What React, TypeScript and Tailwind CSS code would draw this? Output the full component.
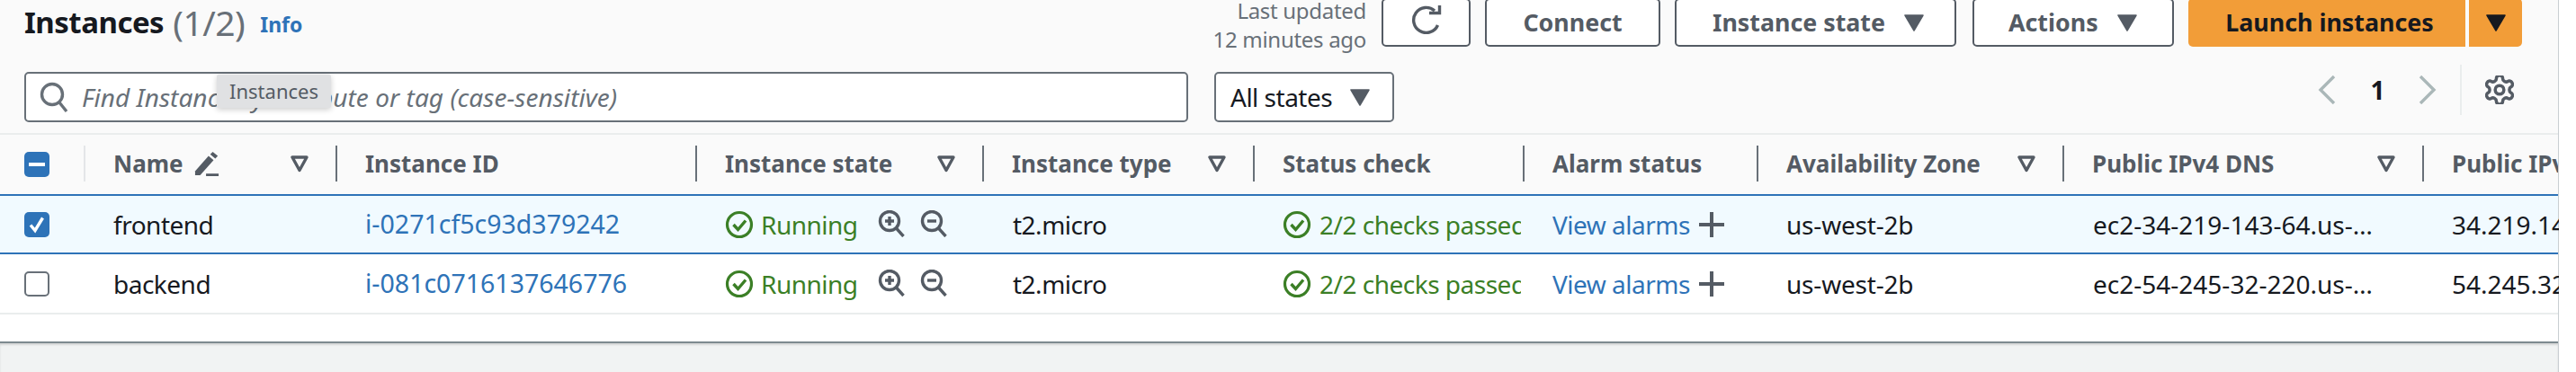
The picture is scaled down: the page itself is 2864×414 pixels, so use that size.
import React from 'react';

const columns = 'grid grid-cols-[93px_280px_400px_319px_301px_300px_260px_340px_400px_152px]';

const Caret = ({ className = 'text-[#545b64]' }: { className?: string }) => (
  <svg width="22" height="20" viewBox="0 0 22 20" className={className}>
    <path d="M1 2h20L11 19z" fill="currentColor" stroke="currentColor" strokeWidth="1.5" strokeLinejoin="round" />
  </svg>
);

const SortIcon = () => (
  <svg width="20" height="20" viewBox="0 0 20 20" className="text-[#545b64]">
    <path d="M2 3h16L10 17.5z" fill="none" stroke="currentColor" strokeWidth="3.4" strokeLinejoin="round" />
  </svg>
);

const StatusIcon = () => (
  <svg width="32" height="32" viewBox="0 0 32 32" fill="none" stroke="#3b7f26" className="shrink-0">
    <circle cx="16" cy="16" r="13.5" strokeWidth="3.2" />
    <path d="M9.5 16l5 5.5 8.5-10" strokeWidth="3.4" />
  </svg>
);

const ZoomIcon = ({ plus }: { plus?: boolean }) => (
  <svg width="30" height="30" viewBox="0 0 30 30" fill="none" stroke="#545b64" strokeWidth="3.4">
    <circle cx="13" cy="12" r="10.5" />
    <path d="M20.5 20l8 9" />
    <path d={plus ? 'M8 12h10M13 7v10' : 'M8 12h10'} />
  </svg>
);

const HeaderCell = ({ label, sort, first, pencil }: { label: string; sort?: boolean; first?: boolean; pencil?: boolean }) => (
  <div className="relative flex h-full items-center pl-[33px] pr-[30px]">
    <span className={first ? 'absolute left-0 h-[40px] w-[2px] bg-[#e4e6e8]' : 'absolute left-0 h-[40px] w-[2px] bg-[#687078]'} />
    <span className="whitespace-nowrap">{label}</span>
    {pencil && (
      <svg width="28" height="30" viewBox="0 0 30 30" className="ml-[12px]" fill="#545b64">
        <path d="M1 24L17 6l6 5L7 29H1z" />
        <path d="M19 4l3-3 6 5-3 3z" />
        <path d="M14 27h15v3H14z" />
      </svg>
    )}
    {sort && (
      <span className="ml-auto flex">
        <SortIcon />
      </span>
    )}
  </div>
);

const Checkbox = ({ checked }: { checked?: boolean }) =>
  checked ? (
    <span className="flex h-[28px] w-[28px] items-center justify-center rounded-[5px] bg-[#2e73b8]">
      <svg width="20" height="20" viewBox="0 0 20 20" fill="none" stroke="#fff" strokeWidth="3.4">
        <path d="M3 10.5l5 6L16.5 2.5" />
      </svg>
    </span>
  ) : (
    <span className="h-[28px] w-[28px] rounded-[5px] border-[2px] border-[#687078] bg-white" />
  );

const rows = [
  { name: 'frontend', id: 'i-0271cf5c93d379242', dns: 'ec2-34-219-143-64.us-…', ip: '34.219.143.64', selected: true },
  { name: 'backend', id: 'i-081c0716137646776', dns: 'ec2-54-245-32-220.us-…', ip: '54.245.32.220', selected: false },
];

export default function App() {
  return (
    <div className="flex h-[414px] w-[2864px] overflow-hidden bg-white font-['Noto_Sans',sans-serif] text-[28px] tracking-[-0.5px] text-[#16191f]">
      <div className="flex w-[2845px] shrink-0 flex-col border-r-[1px] border-[#c9ced2]">
        {/* Toolbar */}
        <div className="flex h-[148px] flex-col bg-[#fafafa] pl-[27px] pr-[40px]">
          <div className="-mt-[2px] flex h-[54px] items-center">
            <h1 className="text-[33px] font-bold">Instances</h1>
            <span className="ml-[10px] text-[39px] text-[#687078]">(1/2)</span>
            <a className="ml-[17px] mt-[4px] text-[23px] font-bold tracking-normal text-[#2e73b8]">Info</a>
            <div className="ml-auto mr-[17px] mt-[6px] text-right text-[24px] leading-[32px] tracking-[-0.3px] text-[#687078]">
              <div>Last updated</div>
              <div>12 minutes ago</div>
            </div>
            <div className="flex h-full items-stretch text-[26.8px] font-bold tracking-normal text-[#545b64]">
              <button className="flex w-[99px] items-center justify-center rounded-[5px] border-[2px] border-[#545b64] bg-white">
                <svg width="34" height="32" viewBox="0 0 34 32" fill="none" stroke="#545b64" strokeWidth="3.4" className="-mt-[6px]">
                  <path d="M26 6A14 14 0 1 0 29.5 22" />
                  <path d="M20 8.5h11.5V0" />
                </svg>
              </button>
              <button className="ml-[16px] w-[195px] rounded-[5px] border-[2px] border-[#545b64] bg-white">Connect</button>
              <button className="ml-[16px] flex w-[313px] items-center gap-[21px] rounded-[5px] border-[2px] border-[#545b64] bg-white pl-[40px]">
                Instance state <Caret />
              </button>
              <button className="ml-[18px] flex w-[224px] items-center gap-[21px] rounded-[5px] border-[2px] border-[#545b64] bg-white pl-[38px]">
                Actions <Caret />
              </button>
              <button className="ml-[16px] w-[308px] rounded-l-[5px] bg-[#f29d38] pl-[6px] text-[#16191f]">Launch instances</button>
              <button className="ml-[4px] flex w-[59px] items-center justify-center rounded-r-[5px] bg-[#f29d38]">
                <Caret className="text-[#16191f]" />
              </button>
            </div>
          </div>
          <div className="relative mt-[28px] flex h-[56px] items-start">
            <div className="flex h-full w-[1294px] items-center rounded-[5px] border-[2px] border-[#687078] bg-white pl-[15px]">
              <svg width="32" height="36" viewBox="0 0 32 36" fill="none" stroke="#687078" strokeWidth="3.4">
                <circle cx="14" cy="15" r="11.5" />
                <path d="M22 24l8 10" />
              </svg>
              <span className="ml-[15px] italic tracking-[0.05px] text-[#687078]">Find Instance by attribute or tag (case-sensitive)</span>
            </div>
            <button className="ml-[29px] flex h-full w-[200px] items-center gap-[20px] rounded-[5px] border-[2px] border-[#687078] bg-white pl-[16px]">
              All states <Caret />
            </button>
            <div className="ml-auto -mt-[8px] mr-[9px] flex h-[56px] items-center text-[#16191f]">
              <svg width="20" height="32" viewBox="0 0 20 32" fill="none" stroke="#aab7b8" strokeWidth="3.4">
                <path d="M18 1L3 16l15 15" />
              </svg>
              <span className="ml-[38px] font-bold">1</span>
              <svg width="20" height="32" viewBox="0 0 20 32" fill="none" stroke="#aab7b8" strokeWidth="3.4" className="ml-[38px]">
                <path d="M2 1l15 15L2 31" />
              </svg>
              <span className="ml-[26px] h-full w-[2px] bg-[#eaeded]" />
              <svg width="32" height="32" viewBox="2 2 20 20" fill="none" stroke="#545b64" strokeWidth="2.2" className="ml-[26px]">
                <path d="M12.22 2h-.44a2 2 0 0 0-2 2v.18a2 2 0 0 1-1 1.73l-.43.25a2 2 0 0 1-2 0l-.15-.08a2 2 0 0 0-2.73.73l-.22.38a2 2 0 0 0 .73 2.73l.15.1a2 2 0 0 1 1 1.72v.51a2 2 0 0 1-1 1.74l-.15.09a2 2 0 0 0-.73 2.73l.22.38a2 2 0 0 0 2.73.73l.15-.08a2 2 0 0 1 2 0l.43.25a2 2 0 0 1 1 1.73V20a2 2 0 0 0 2 2h.44a2 2 0 0 0 2-2v-.18a2 2 0 0 1 1-1.73l.43-.25a2 2 0 0 1 2 0l.15.08a2 2 0 0 0 2.73-.73l.22-.39a2 2 0 0 0-.73-2.73l-.15-.08a2 2 0 0 1-1-1.74v-.5a2 2 0 0 1 1-1.74l.15-.09a2 2 0 0 0 .73-2.73l-.22-.38a2 2 0 0 0-2.73-.73l-.15.08a2 2 0 0 1-2 0l-.43-.25a2 2 0 0 1-1-1.73V4a2 2 0 0 0-2-2z" />
                <circle cx="12" cy="12" r="3" />
              </svg>
            </div>
            <div className="absolute left-[214px] top-[3px] flex h-[37px] w-[127px] items-center justify-center rounded-[2px] bg-[#e0e1e3] text-[22px] tracking-normal text-[#545b64] shadow-[0_2px_6px_rgba(0,0,0,0.2)]">
              Instances
            </div>
          </div>
        </div>

        {/* Table header */}
        <div className={`${columns} h-[68px] items-center overflow-hidden border-t-[2px] border-[#eaeded] bg-[#fafafa] pb-[2px] text-[26px] font-bold tracking-normal text-[#545b64]`}>
          <div className="pl-[27px] pt-[1px]">
            <span className="flex h-[28px] w-[28px] items-center justify-center rounded-[5px] bg-[#2e73b8]">
              <span className="h-[4px] w-[18px] bg-white" />
            </span>
          </div>
          <HeaderCell label="Name" first pencil sort />
          <HeaderCell label="Instance ID" />
          <HeaderCell label="Instance state" sort />
          <HeaderCell label="Instance type" sort />
          <HeaderCell label="Status check" />
          <HeaderCell label="Alarm status" />
          <HeaderCell label="Availability Zone" sort />
          <HeaderCell label="Public IPv4 DNS" sort />
          <HeaderCell label="Public IPv4 address" />
        </div>

        {/* Rows */}
        {rows.map((row) => (
          <div
            key={row.id}
            className={
              row.selected
                ? `${columns} h-[67px] items-center border-y-[2px] border-[#2e73b8] bg-[#f1faff]`
                : `${columns} h-[67px] items-center border-b-[2px] border-[#eaeded] bg-white`
            }
          >
            <div className="pl-[27px]">
              <div className="flex">
                <Checkbox checked={row.selected} />
              </div>
            </div>
            <div className="pl-[33px]">{row.name}</div>
            <div className="pl-[33px] text-[28.5px] tracking-normal text-[#2e73b8]">{row.id}</div>
            <div className="flex items-center pl-[33px]">
              <StatusIcon />
              <span className="ml-[8px] text-[#3b7f26]">Running</span>
              <span className="-mt-[2px] ml-[22px] flex gap-[17px]">
                <ZoomIcon plus />
                <ZoomIcon />
              </span>
            </div>
            <div className="pl-[34px]">t2.micro</div>
            <div className="flex items-center overflow-hidden pl-[33px] pr-[2px] text-[#3b7f26]">
              <StatusIcon />
              <span className="ml-[9px] overflow-hidden whitespace-nowrap">2/2 checks passed</span>
            </div>
            <div className="flex items-center pl-[33px] text-[#2e73b8]">
              View alarms
              <svg width="28" height="28" viewBox="0 0 28 28" stroke="#545b64" strokeWidth="4" className="ml-[10px]">
                <path d="M0 14h28M14 0v28" />
              </svg>
            </div>
            <div className="pl-[33px] tracking-[-0.2px]">us-west-2b</div>
            <div className="whitespace-nowrap pl-[34px] tracking-normal">{row.dns}</div>
            <div className="overflow-hidden whitespace-nowrap pl-[33px] tracking-normal">{row.ip}</div>
          </div>
        ))}

        <div className="h-[32px] border-b-[2px] border-[#7d8a8f] bg-white" />
        <div className="flex-1 bg-[#f1f3f3] shadow-[inset_0_2px_2px_rgba(0,0,0,0.12)]" />
      </div>
    </div>
  );
}
